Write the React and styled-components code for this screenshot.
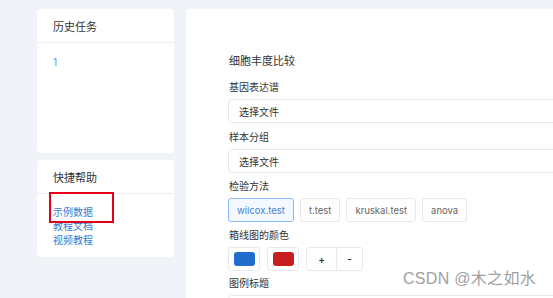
import React from "react";
import styled, { createGlobalStyle } from "styled-components";

const Global = createGlobalStyle`
  html, body { margin: 0; padding: 0; overflow: hidden; }
  body {
    background: #f0f3f8;
    font-family: Inter, "Noto Sans CJK SC", sans-serif;
    color: #333;
  }
`;

const Page = styled.div`
  position: relative;
  display: flex;
  align-items: flex-start;
  gap: 12px;
  padding: 9px 0 0 37px;
  width: 553px;
  height: 298px;
  box-sizing: border-box;
  overflow: hidden;
`;

const LeftCol = styled.div`
  display: flex;
  flex-direction: column;
  gap: 7px;
  width: 137px;
  flex: none;
`;

const Card = styled.div`
  position: relative;
  background: #fff;
  border-radius: 4px;
  height: ${(p) => p.$h}px;
  box-sizing: border-box;
`;

const CardHeader = styled.div`
  height: 34px;
  box-sizing: border-box;
  border-bottom: 1px solid #ebeef5;
  padding-left: 16px;
  display: flex;
  align-items: center;
  font-size: 11px;
  color: #333;
`;

const CardBody = styled.div`
  padding: ${(p) => p.$pt}px 16px 0 16px;
  display: flex;
  flex-direction: column;
`;

const Link = styled.a`
  font-size: ${(p) => p.$fs || 10}px;
  line-height: 14px;
  color: ${(p) => p.$c || "#3b78cf"};
  text-decoration: none;
`;

const Highlight = styled.div`
  position: absolute;
  left: 12px;
  top: 32px;
  width: 65px;
  height: 31px;
  box-sizing: border-box;
  border: 2px solid #e3001b;
`;

const MainCard = styled.div`
  background: #fff;
  border-radius: 4px;
  width: 420px;
  height: 320px;
  flex: none;
  box-sizing: border-box;
  padding: 45px 0 0 42px;
  display: flex;
  flex-direction: column;
`;

const Title = styled.div`
  font-size: 11px;
  line-height: 14px;
  padding-left: 1px;
  color: #333;
  margin-bottom: 12px;
`;

const Label = styled.div`
  font-size: 10px;
  line-height: 14px;
  padding-left: 1px;
  color: #333;
  margin-top: ${(p) => p.$mt ?? 6}px;
  margin-bottom: 5px;
`;

const FileInput = styled.div`
  height: 24px;
  box-sizing: border-box;
  border: 1px solid #e4e7ed;
  border-radius: 4px;
  padding-left: 10px;
  display: flex;
  align-items: center;
  font-size: 10px;
  color: #333;
`;

const Row = styled.div`
  display: flex;
  gap: ${(p) => p.$gap || 6}px;
`;

const OptionButton = styled.div`
  height: 24px;
  box-sizing: border-box;
  padding: 0 8px;
  display: flex;
  align-items: center;
  font-size: 9.5px;
  border-radius: 3px;
  border: 1px solid ${(p) => (p.$active ? "#8db7f2" : "#e6e8eb")};
  background: ${(p) => (p.$active ? "#f4f8ff" : "#fff")};
  color: ${(p) => (p.$active ? "#4b7fcf" : "#666")};
`;

const ColorButton = styled.div`
  width: 32px;
  height: 24px;
  box-sizing: border-box;
  border: 1px solid #e6e8eb;
  border-radius: 3px;
  display: flex;
  align-items: center;
  justify-content: center;
`;

const Swatch = styled.div`
  width: 21px;
  height: 14px;
  border-radius: 3px;
  background: ${(p) => p.$c};
`;

const Group = styled.div`
  display: flex;
  height: 24px;
  box-sizing: border-box;
  border: 1px solid #e6e8eb;
  border-radius: 3px;
`;

const GroupItem = styled.div`
  width: ${(p) => p.$w}px;
  display: flex;
  align-items: center;
  justify-content: center;
  font-size: 10px;
  font-weight: 600;
  color: #333;
  & + & { border-left: 1px solid #e6e8eb; }
`;

const Watermark = styled.div`
  position: absolute;
  left: 403px;
  top: 268px;
  font-size: 16px;
  line-height: 22px;
  color: #a0a0a0;
  white-space: nowrap;
  font-family: "Liberation Sans", "Noto Sans CJK SC", sans-serif;
  letter-spacing: 0.3px;
`;

export default function App() {
  return (
    <>
      <Global />
      <Page>
        <LeftCol>
          <Card $h={144}>
            <CardHeader>历史任务</CardHeader>
            <CardBody $pt={12}>
              <Link $c="#409eff">1</Link>
            </CardBody>
          </Card>
          <Card $h={97}>
            <CardHeader>快捷帮助</CardHeader>
            <CardBody $pt={11}>
              <Link>示例数据</Link>
              <Link>教程文档</Link>
              <Link>视频教程</Link>
            </CardBody>
            <Highlight />
          </Card>
        </LeftCol>
        <MainCard>
          <Title>细胞丰度比较</Title>
          <Label $mt={0}>基因表达谱</Label>
          <FileInput>选择文件</FileInput>
          <Label $mt={7}>样本分组</Label>
          <FileInput>选择文件</FileInput>
          <Label>检验方法</Label>
          <Row>
            <OptionButton $active>wilcox.test</OptionButton>
            <OptionButton>t.test</OptionButton>
            <OptionButton>kruskal.test</OptionButton>
            <OptionButton>anova</OptionButton>
          </Row>
          <Label>箱线图的颜色</Label>
          <Row $gap={7}>
            <ColorButton>
              <Swatch $c="#1f6dcc" />
            </ColorButton>
            <ColorButton>
              <Swatch $c="#c71f1f" />
            </ColorButton>
            <Group>
              <GroupItem $w={29}>+</GroupItem>
              <GroupItem $w={25}>-</GroupItem>
            </Group>
          </Row>
          <Label $mt={5}>图例标题</Label>
          <FileInput />
        </MainCard>
        <Watermark>CSDN @木之如水</Watermark>
      </Page>
    </>
  );
}
